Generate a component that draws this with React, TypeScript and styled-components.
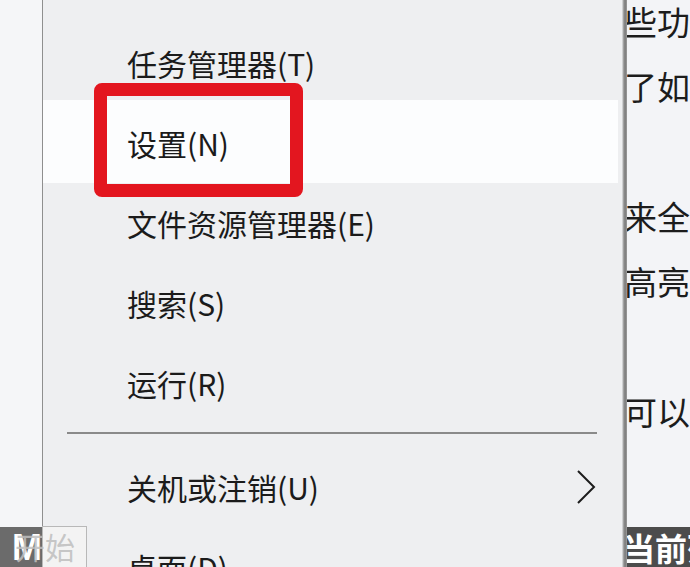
import styled, { createGlobalStyle } from 'styled-components';

const GlobalStyle = createGlobalStyle`
  html, body {
    margin: 0;
    padding: 0;
    overflow: hidden;
  }
  body {
    font-family: "Noto Sans CJK SC", "Noto Sans", sans-serif;
  }
`;

const Screen = styled.div`
  position: relative;
  display: flex;
  width: 690px;
  height: 567px;
  overflow: hidden;
  background: #eeeff1;
`;

const LeftStrip = styled.div`
  width: 42px;
  flex-shrink: 0;
  background: #f5f6f8;
  border-right: 1px solid #8f8f8f;
`;

const Menu = styled.div`
  position: relative;
  width: 575px;
  flex-shrink: 0;
  padding: 23px 4px 0 0;
  background: #eeeff1;
`;

const Item = styled.div<{ $active?: boolean }>`
  display: flex;
  align-items: center;
  justify-content: space-between;
  height: ${(p) => (p.$active ? '83px' : '80px')};
  margin-top: ${(p) => (p.$active ? '-3px' : '0')};
  padding: ${(p) => (p.$active ? '3px' : '0')} 22px 0 84px;
  box-sizing: border-box;
  font-size: 30px;
  color: #1b1b1b;
  background: ${(p) => (p.$active ? '#fcfdfe' : 'transparent')};
`;

const Separator = styled.div`
  height: 24px;
  display: flex;
  align-items: flex-start;
  padding: 9px 21px 0 24px;
  box-sizing: border-box;

  &::after {
    content: '';
    flex: 1;
    height: 2px;
    background: #8a8a8a;
  }
`;

const Mark = styled.div`
  position: absolute;
  left: 51px;
  top: 83px;
  width: 209px;
  height: 114px;
  box-sizing: border-box;
  border: 13px solid #e3161f;
  border-radius: 8px;
  pointer-events: none;
`;

const Edge = styled.div`
  width: 5px;
  flex-shrink: 0;
  background: linear-gradient(to right, #e4e5e7 0, #b9babb 1px, #8a8a8a 2px, #7e7e7e 4px, #a9a9a9 5px);
`;

const Page = styled.div`
  position: relative;
  flex: 1;
  overflow: hidden;
  background: #f3f4f7;
`;

const PageText = styled.div`
  margin: -11px 0 0 -3px;
  font-size: 33px;
  line-height: 65px;
  color: #1c1c1c;
  white-space: nowrap;
`;

const Line = styled.div`
  height: 65px;
`;

const Caption = styled.div`
  position: absolute;
  left: 0;
  right: 0;
  bottom: 0;
  height: 40px;
  background: #4c4c4c;
  color: #ffffff;
  font-size: 32px;
  font-weight: 700;
  line-height: 40px;
  white-space: nowrap;
  text-indent: -4px;
  overflow: hidden;
`;

const StartTip = styled.div`
  position: absolute;
  left: 42px;
  bottom: -1px;
  width: 45px;
  height: 42px;
  box-sizing: border-box;
  border: 1px solid #b8b8b8;
  background: #f3f3f3;
`;

const StartKey = styled.div`
  position: absolute;
  left: 0;
  bottom: 0;
  width: 42px;
  height: 40px;
  background: #6b6b6b;
  color: #ffffff;
  font-family: "Liberation Sans", Arial, sans-serif;
  font-weight: 700;
  font-size: 36px;
  line-height: 42px;
  text-align: right;
  box-sizing: border-box;
`;

const StartLabel = styled.div`
  position: absolute;
  left: 15px;
  bottom: 2px;
  font-size: 30px;
  line-height: 38px;
  color: rgba(190, 190, 190, 0.85);
  white-space: nowrap;
`;

const Chevron = () => (
  <svg width="20" height="34" viewBox="0 0 20 34" fill="none">
    <polyline points="2,1 18,17 2,33" stroke="#1c1c1c" strokeWidth="2" />
  </svg>
);

const items = ['任务管理器(T)', '设置(N)', '文件资源管理器(E)', '搜索(S)', '运行(R)'];

export default function App() {
  return (
    <>
      <GlobalStyle />
      <Screen>
        <LeftStrip />
        <Menu>
          {items.map((label, i) => (
            <Item key={label} $active={i === 1}>
              <span>{label}</span>
            </Item>
          ))}
          <Separator />
          <Item>
            <span>关机或注销(U)</span>
            <Chevron />
          </Item>
          <Item>
            <span>桌面(D)</span>
          </Item>
          <Mark />
        </Menu>
        <Edge />
        <Page>
          <PageText>
            <Line>些功能</Line>
            <Line>了如何</Line>
            <Line />
            <Line>来全部</Line>
            <Line>高亮显</Line>
            <Line />
            <Line>可以在</Line>
          </PageText>
          <Caption>当前列表</Caption>
        </Page>
        <StartKey>M</StartKey>
        <StartTip />
        <StartLabel>开始</StartLabel>
      </Screen>
    </>
  );
}
